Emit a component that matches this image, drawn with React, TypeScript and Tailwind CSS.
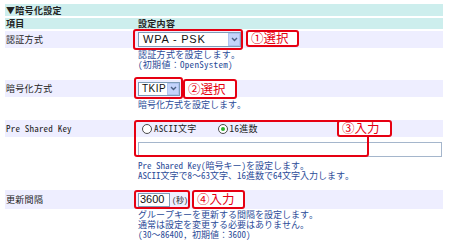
import React from "react";

function Chevron() {
  return (
    <svg width="7" height="5" viewBox="0 0 7 5">
      <path d="M1 1 L3.5 3.5 L6 1" fill="none" stroke="#4d6185" strokeWidth="1.4" />
    </svg>
  );
}

function Note({ children, className }: { children: React.ReactNode; className: string }) {
  return (
    <div
      className={
        "absolute border-2 border-[#e60012] rounded-[3px] bg-white flex items-center pl-[3px] font-['Noto_Sans_CJK_JP',sans-serif] text-[12.5px] text-[#e60012] leading-none " +
        className
      }
    >
      {children}
    </div>
  );
}

function Box({ className }: { className: string }) {
  return <div className={"absolute border-2 border-[#e60012] rounded-[3px] " + className} />;
}

export default function App() {
  return (
    <div className="w-[450px] h-[243px] bg-white overflow-hidden pt-[4px] pl-[5px] font-['Noto_Sans_Mono_CJK_JP','Noto_Sans_CJK_JP',monospace] text-[9px] leading-none text-[#222]">
      <div className="w-[438px]">
        <div className="h-[12px] bg-[#cdeeed] flex items-center pl-[1px] font-bold tracking-[0.3px]">▼暗号化設定</div>
        <div className="mt-[2px] h-[11px] bg-[#cdeeed] flex items-center font-bold tracking-[0.3px]">
          <div className="w-[128px] pl-[1px]">項目</div>
          <div className="pl-[5px]">設定内容</div>
        </div>

        {/* Row 1 */}
        <div className="mt-[2px] h-[17px] bg-[#eeeeff] flex items-center">
          <div className="w-[128px] pl-[1px] font-medium tracking-[0.3px]">認証方式</div>
          <div className="relative h-full flex-1 flex items-center pl-[5px]">
            <div className="h-[15px] w-[103px] bg-white border border-[#7f9db9] flex items-center justify-between">
              <span className="pl-[4px] font-['Liberation_Sans',sans-serif] text-[11px] tracking-[0.8px] text-[#111]">WPA - PSK</span>
              <span className="w-[12px] h-[13px] bg-[#c4d4fb] border border-[#b0c4ef] flex items-center justify-center">
                <Chevron />
              </span>
            </div>
            <Box className="left-0 top-[-2px] w-[110px] h-[21px]" />
            <Note className="left-[113px] top-[-1px] w-[53px] h-[17px]">①選択</Note>
          </div>
        </div>
        <div className="h-[32px] flex">
          <div className="w-[128px]" />
          <div className="pl-[5px] pt-[2px] text-[#2b4b98] leading-[10px] tracking-[0.3px]">
            <div>認証方式を設定します。</div>
            <div>(初期値：OpenSystem)</div>
          </div>
        </div>

        {/* Row 2 */}
        <div className="h-[17px] bg-[#eeeeff] flex items-center">
          <div className="w-[128px] pl-[1px] font-medium tracking-[0.3px]">暗号化方式</div>
          <div className="relative h-full flex-1 flex items-center pl-[5px]">
            <div className="h-[14px] w-[42px] bg-white border border-[#7f9db9] flex items-center justify-between">
              <span className="pl-[3px] font-['Liberation_Sans',sans-serif] text-[10px] tracking-[0.5px] text-[#111]">TKIP</span>
              <span className="w-[12px] h-[12px] bg-[#c4d4fb] border border-[#b0c4ef] flex items-center justify-center">
                <Chevron />
              </span>
            </div>
            <Box className="left-[1px] top-[-3px] w-[49px] h-[22px]" />
            <Note className="left-[50px] top-[-1px] w-[54px] h-[20px]">②選択</Note>
          </div>
        </div>
        <div className="h-[23px] flex">
          <div className="w-[128px]" />
          <div className="pl-[5px] pt-[3px] text-[#2b4b98] leading-[10px]">
            <div>暗号化方式を設定します。</div>
          </div>
        </div>

        {/* Row 3 */}
        <div className="h-[17px] bg-[#eeeeff] flex items-center">
          <div className="w-[128px] pl-[1px] tracking-[0.2px] text-[#222]">Pre Shared Key</div>
          <div className="relative h-full flex-1 flex items-center pl-[9px]">
            <span className="w-[10px] h-[10px] rounded-full border border-[#4a4a4a] bg-white" />
            <span className="ml-[2px] tracking-[0.3px]">ASCII文字</span>
            <span className="ml-[21px] w-[10px] h-[10px] rounded-full border border-[#4a4a4a] bg-white flex items-center justify-center">
              <span className="w-[4px] h-[4px] rounded-full bg-[#2db02d]" />
            </span>
            <span className="ml-[2px] tracking-[0.3px]">16進数</span>
          </div>
        </div>
        <div className="relative flex">
          <div className="w-[128px]" />
          <div className="flex-1 pl-[5px] pt-[5px]">
            <div className="h-[15px] w-[304px] bg-white border border-[#a5b6cc]" />
            <div className="pt-[4px] text-[#2b4b98] leading-[10px] h-[33px]">
              <div>Pre Shared Key(暗号キー)を設定します。</div>
              <div>ASCII文字で8～63文字、16進数で64文字入力します。</div>
            </div>
          </div>
          <Box className="left-[129px] top-[-17px] w-[235px] h-[37px]" />
          <Note className="left-[332px] top-[-17px] w-[55px] h-[17px]">③入力</Note>
        </div>

        {/* Row 4 */}
        <div className="h-[19px] bg-[#eeeeff] flex items-center">
          <div className="w-[128px] pl-[1px] font-medium tracking-[0.3px]">更新間隔</div>
          <div className="relative h-full flex-1 flex items-center pl-[5px]">
            <div className="h-[14px] w-[32px] bg-white border border-[#7f9db9] flex items-center pl-[1px] font-['Liberation_Sans',sans-serif] text-[11px] text-[#111]">
              3600
            </div>
            <span className="ml-[2px] text-[8px]">(秒)</span>
            <Box className="left-[1px] top-0 w-[56px] h-[19px]" />
            <Note className="left-[59px] top-0 w-[53px] h-[19px]">④入力</Note>
          </div>
        </div>
        <div className="flex">
          <div className="w-[128px]" />
          <div className="pl-[5px] pt-[1px] text-[#2b4b98] leading-[10px]">
            <div>グループキーを更新する間隔を設定します。</div>
            <div>通常は設定を変更する必要はありません。</div>
            <div>(30～86400, 初期値：3600)</div>
          </div>
        </div>
      </div>
    </div>
  );
}
